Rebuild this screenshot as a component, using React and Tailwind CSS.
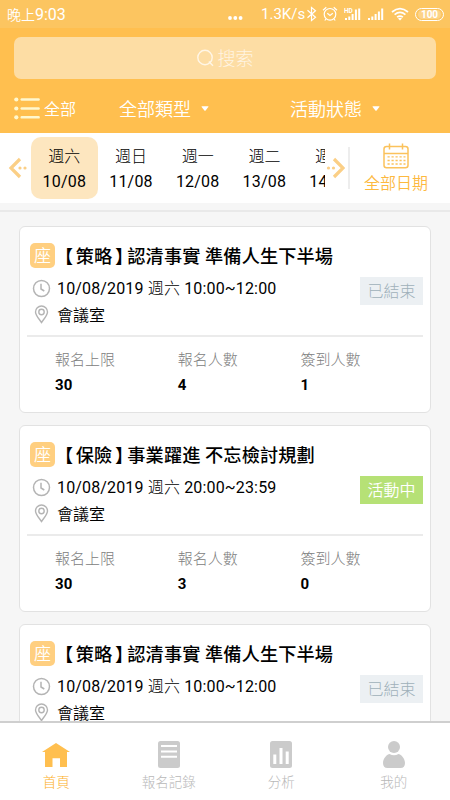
import React from 'react';

const days = [
  ['週六', '10/08'],
  ['週日', '11/08'],
  ['週一', '12/08'],
  ['週二', '13/08'],
  ['週三', '14/08'],
];

const events = [
  { tag: '策略', title: '認清事實 準備人生下半場', date: '10/08/2019', day: '週六', time: '10:00~12:00', active: false, stats: ['30', '4', '1'] },
  { tag: '保險', title: '事業躍進 不忘檢討規劃', date: '10/08/2019', day: '週六', time: '20:00~23:59', active: true, stats: ['30', '3', '0'] },
  { tag: '策略', title: '認清事實 準備人生下半場', date: '10/08/2019', day: '週六', time: '10:00~12:00', active: false },
];

function Signal({ hd }) {
  return (
    <svg width="18" height="14" viewBox="0 0 18 14" fill="#fff">
      <rect x="1" y="11" width="2" height="2" />
      <rect x="4.3" y="9.5" width="2" height="3.5" />
      <rect x="7.6" y="7" width="2" height="6" />
      <rect x="10.9" y={hd ? 2.5 : 4.5} width="2" height={hd ? 10.5 : 8.5} />
      <rect x="14.2" y="1.5" width="2" height="11.5" />
      {hd && <text x="0" y="6" fontSize="6.5" fontWeight="700" fontFamily="Roboto">HD</text>}
    </svg>
  );
}

function StatusBar() {
  return (
    <div className="flex h-7 items-center bg-[#fcc560] pl-[7px] text-white">
      <span className="w-[221px] pt-[1px] text-[16px] leading-[27px]"><span className="text-[14px] font-[350]">晚上</span>9:03</span>
      <svg width="33" height="6" viewBox="0 0 33 6" className="mt-[7px] shrink-0" fill="#fff">
        <circle cx="2" cy="3" r="1.9" /><circle cx="7.3" cy="3" r="1.9" /><circle cx="12.6" cy="3" r="1.9" />
      </svg>
      <span className="w-[45px] shrink-0 pt-[1px] text-[15px] leading-[27px] whitespace-nowrap">1.3K/s</span>
      <svg width="12" height="16" viewBox="0 0 12 16" className="shrink-0" fill="none" stroke="#fff" strokeWidth="1.2">
        <path d="M1.5 4.3 9.5 11.3 5.5 14.6V1.4L9.5 4.7 1.5 11.7" />
      </svg>
      <svg width="16" height="16" viewBox="0 0 16 16" className="ml-[4px] shrink-0" fill="none" stroke="#fff" strokeWidth="1.2">
        <circle cx="8" cy="8.3" r="5.8" />
        <path d="M1 4.2 4.3 1.3M15 4.2 11.7 1.3M5.3 7.3 8 9.5 10.8 7.3M4 13 2.8 14.5M12 13l1.2 1.5" />
      </svg>
      <div className="ml-[6px] flex shrink-0 gap-[5px]"><Signal hd /><Signal /></div>
      <svg width="18" height="14" viewBox="0 0 18 14" className="ml-[6px] shrink-0" fill="none" stroke="#fff" strokeWidth="1.7">
        <path d="M1 5Q9-1.8 17 5M3.6 7.7Q9 3.2 14.4 7.7M6.1 10.2Q9 7.9 11.9 10.2" />
        <path d="M7 11.4 9 13.5 11 11.4Q9 10 7 11.4Z" fill="#fff" stroke="none" />
      </svg>
      <div className="ml-[6px] flex h-[13px] w-[29px] shrink-0 items-center justify-center rounded-full border border-white">
        <span className="flex h-[9px] w-[23px] items-center justify-center rounded-full bg-white/25 text-[10px] leading-[9px] font-bold">100</span>
      </div>
    </div>
  );
}

function Caret() {
  return <svg width="8" height="5" viewBox="0 0 8 5" className="mb-[1px]"><path d="M1 .3h6q.8 0 .3.7L4.6 4.5q-.6.6-1.2 0L.7 1Q.2.3 1 .3Z" fill="#fff" /></svg>;
}

function Header() {
  return (
    <header className="h-[105px] bg-[#ffbf4f] text-white">
      <div className="px-[14px] pt-[8.5px]">
        <div className="flex h-[42.5px] items-center justify-center rounded-[7px] bg-[#fddda4]">
          <svg width="17" height="18" viewBox="0 0 17 18" fill="none" stroke="#fff6e6" strokeWidth="1.4" className="mr-[4px]">
            <circle cx="8" cy="8.5" r="7.2" /><path d="m11.8 12.5 4.2 4.2" />
          </svg>
          <span className="pt-[2px] text-[18px] leading-6 font-light text-[#fff4e2]">搜索</span>
        </div>
      </div>
      <div className="flex h-[60px] items-center pl-[14px]">
        <svg width="26" height="23" viewBox="0 0 26 23" fill="#fff8cf" className="mb-[2px] shrink-0">
          <circle cx="2.3" cy="2.5" r="2.1" /><circle cx="2.3" cy="11.5" r="2.1" /><circle cx="2.3" cy="20.3" r="2.1" />
          <rect x="6.5" y="1.2" width="19.3" height="2.6" rx="1.2" /><rect x="6.5" y="10.2" width="19.3" height="2.6" rx="1.2" /><rect x="6.5" y="19" width="19.3" height="2.6" rx="1.2" />
        </svg>
        <span className="ml-[4px] w-[75px] pt-[1px] text-[16px] font-[350]">全部</span>
        <div className="flex w-[171px] items-center gap-[10px] text-[18px] font-[350]">全部類型<Caret /></div>
        <div className="flex items-center gap-[10px] text-[18px] font-[350]">活動狀態<Caret /></div>
      </div>
    </header>
  );
}

function Arrow({ right }) {
  return (
    <svg width="20" height="22" viewBox="0 0 20 22" fill="none" className={right ? 'shrink-0 rotate-180' : 'shrink-0'}>
      <path d={right ? 'M11 2 2 11l9 9' : 'M13 2 4 11l9 9'} stroke="#fbcf86" strokeWidth="3.2" />
      <circle cx={right ? 11.5 : 13} cy="11" r="1.6" fill="#fbcf86" /><circle cx={right ? 16.5 : 18} cy="11" r="1.6" fill="#fbcf86" />
    </svg>
  );
}

function Dates() {
  return (
    <div className="flex h-[70px] items-center bg-white">
      <div className="w-[31px] shrink-0 pl-[7px]"><Arrow /></div>
      <div className="flex w-[294px] shrink-0 overflow-hidden text-black">
        {days.map(([d, n], i) => (
          <div key={n} className={'flex h-[62px] w-[66.7px] shrink-0 flex-col items-center rounded-[10px] pt-[7px] text-[16px] leading-[25px] ' + (i === 0 ? 'bg-[#fde6bf]' : '')}>
            <span className="font-light">{d}</span>
            <span className="tracking-[0.2px]">{n}</span>
          </div>
        ))}
      </div>
      <Arrow right />
      <div className="ml-[3px] h-[42px] w-[2px] shrink-0 bg-[#ededed]" />
      <div className="flex flex-1 flex-col items-center pt-[3px] pr-[8px] text-[#fdb93f]">
        <svg width="26" height="26" viewBox="0 0 26 26" fill="none" stroke="#fbc25c" strokeWidth="1.5">
          <rect x="1" y="3.5" width="24" height="21.3" rx="2.5" />
          <path d="M1 10.5h24M6.5.5v6M19.5.5v6" />
          <path d="M4.5 13.8h18M4.5 17.5h18M4.5 21h18" strokeDasharray="2.2 1.8" strokeWidth="1.3" />
        </svg>
        <span className="pt-[2px] text-[16px] leading-[26px] font-[350]">全部日期</span>
      </div>
    </div>
  );
}

function Card({ e }) {
  return (
    <article className="h-[187px] shrink-0 rounded-[6px] border border-[#e2e2e2] bg-white px-[7px] pt-[16px] text-black">
      <div className="flex h-[25px] items-center pl-[3px]">
        <span className="flex h-[25px] w-[25px] shrink-0 items-center justify-center rounded-[5px] bg-[#ffcf80] pt-[1px] text-[17px] leading-[24px] font-[350] text-white">座</span>
        <h2 className="pt-[2px] text-[18.2px] leading-[25px] font-medium whitespace-nowrap">
          <span className="tracking-[2.5px]">【</span>{e.tag[0]}<span className="tracking-[3px]">{e.tag[1]}</span><span className="tracking-[-6px]">】</span><span className="tracking-[0.1px]">{e.title}</span>
        </h2>
      </div>
      <div className="flex h-[69px] justify-between border-b-2 border-[#ebebeb]">
        <div className="flex flex-col pt-[8px] pl-[5px] text-[16px] leading-[26px]">
          <div className="flex items-center">
            <svg width="19" height="19" viewBox="0 0 19 19" fill="none" stroke="#b4b4b4" strokeWidth="1.5" className="mr-[6px] mb-[2px]">
              <circle cx="9.5" cy="9.5" r="8" /><path d="M9 4.8v5.2l3.3 2" />
            </svg>
            <span className="tracking-[0.15px] whitespace-nowrap">{e.date} <span className="font-light">{e.day}</span> {e.time}</span>
          </div>
          <div className="flex items-center">
            <svg width="19" height="19" viewBox="0 0 19 19" fill="none" stroke="#b4b4b4" strokeWidth="1.4" className="mr-[6px] mb-[2px]">
              <path d="M9.5 17.5C7.5 14.5 3.5 10.5 3.5 7a6 6 0 0 1 12 0c0 3.5-4 7.5-6 10.5Z" /><circle cx="9.5" cy="7" r="2.7" />
            </svg>
            <span className="mt-[1px] -mb-[1px] font-[350]">會議室</span>
          </div>
        </div>
        <span className={'mt-[9px] flex h-[28px] w-[63px] items-center justify-center pt-[2px] text-[16px] ' + (e.active ? 'bg-[#b6e176] font-[350] text-white' : 'bg-[#ecf0f3] font-light text-[#9fb0ba]')}>
          {e.active ? '活動中' : '已結束'}
        </span>
      </div>
      {e.stats && (
        <div className="flex pt-[11px] pl-[28px]">
          {['報名上限', '報名人數', '簽到人數'].map((label, i) => (
            <div key={label} className="flex w-[122.7px] shrink-0 flex-col">
              <span className="text-[15px] leading-[25px] font-light text-[#808080]">{label}</span>
              <span className="text-[15px] leading-[24px] font-bold tracking-[0.2px]">{e.stats[i]}</span>
            </div>
          ))}
        </div>
      )}
    </article>
  );
}

function NavIcon({ i }) {
  return (
    <svg width="28" height="28" viewBox="0 0 28 28" fill={i ? '#cbcbcb' : '#ffbf4f'}>
      {i === 0 && <path d="M14 2 28 11H25V26H18V17.2H10.5V26H3V11H0Z" />}
      {i === 1 && <><rect x="3" y="0" width="22" height="27" rx="2.5" /><path d="M6 5h16M6 10.5h16M6 15.8h16" stroke="#fff" strokeWidth="2" /></>}
      {i === 2 && <><rect x="3" y="0" width="22" height="27" rx="2.5" /><path d="M7.8 23V13.5M14 23V7M20.2 23V10.5" stroke="#fff" strokeWidth="3" /></>}
      {i === 3 && <><circle cx="14" cy="6" r="6" /><path d="M3 22C3 17 7.5 13 9.5 13Q14 15.5 18.5 13C20.5 13 25 17 25 22Q25 27 20.5 27H7.5Q3 27 3 22Z" /></>}
    </svg>
  );
}

export default function App() {
  return (
    <div className="flex h-[800px] w-[450px] flex-col overflow-hidden bg-[#f6f6f6] font-['Roboto','Noto_Sans_CJK_SC',sans-serif]">
      <StatusBar />
      <Header />
      <Dates />
      <main className="min-h-0 flex-1 overflow-hidden pt-[7px]">
        <div className="h-[2px] bg-[#e9e9e9]" />
        <div className="flex flex-col gap-[12px] px-[19px] pt-[14px]">
          {events.map((e, i) => <Card key={i} e={e} />)}
        </div>
      </main>
      <nav className="flex h-[79px] shrink-0 border-t-2 border-[#cfcfcf] bg-white pt-[18px]">
        {['首頁', '報名記錄', '分析', '我的'].map((t, i) => (
          <div key={t} className={'flex flex-1 flex-col items-center text-[13.5px] font-light ' + (i ? 'text-[#b8b8b8]' : 'text-[#fdb02a]')}>
            <NavIcon i={i} />
            <span className="mt-[3px] leading-[20px]">{t}</span>
          </div>
        ))}
      </nav>
    </div>
  );
}
